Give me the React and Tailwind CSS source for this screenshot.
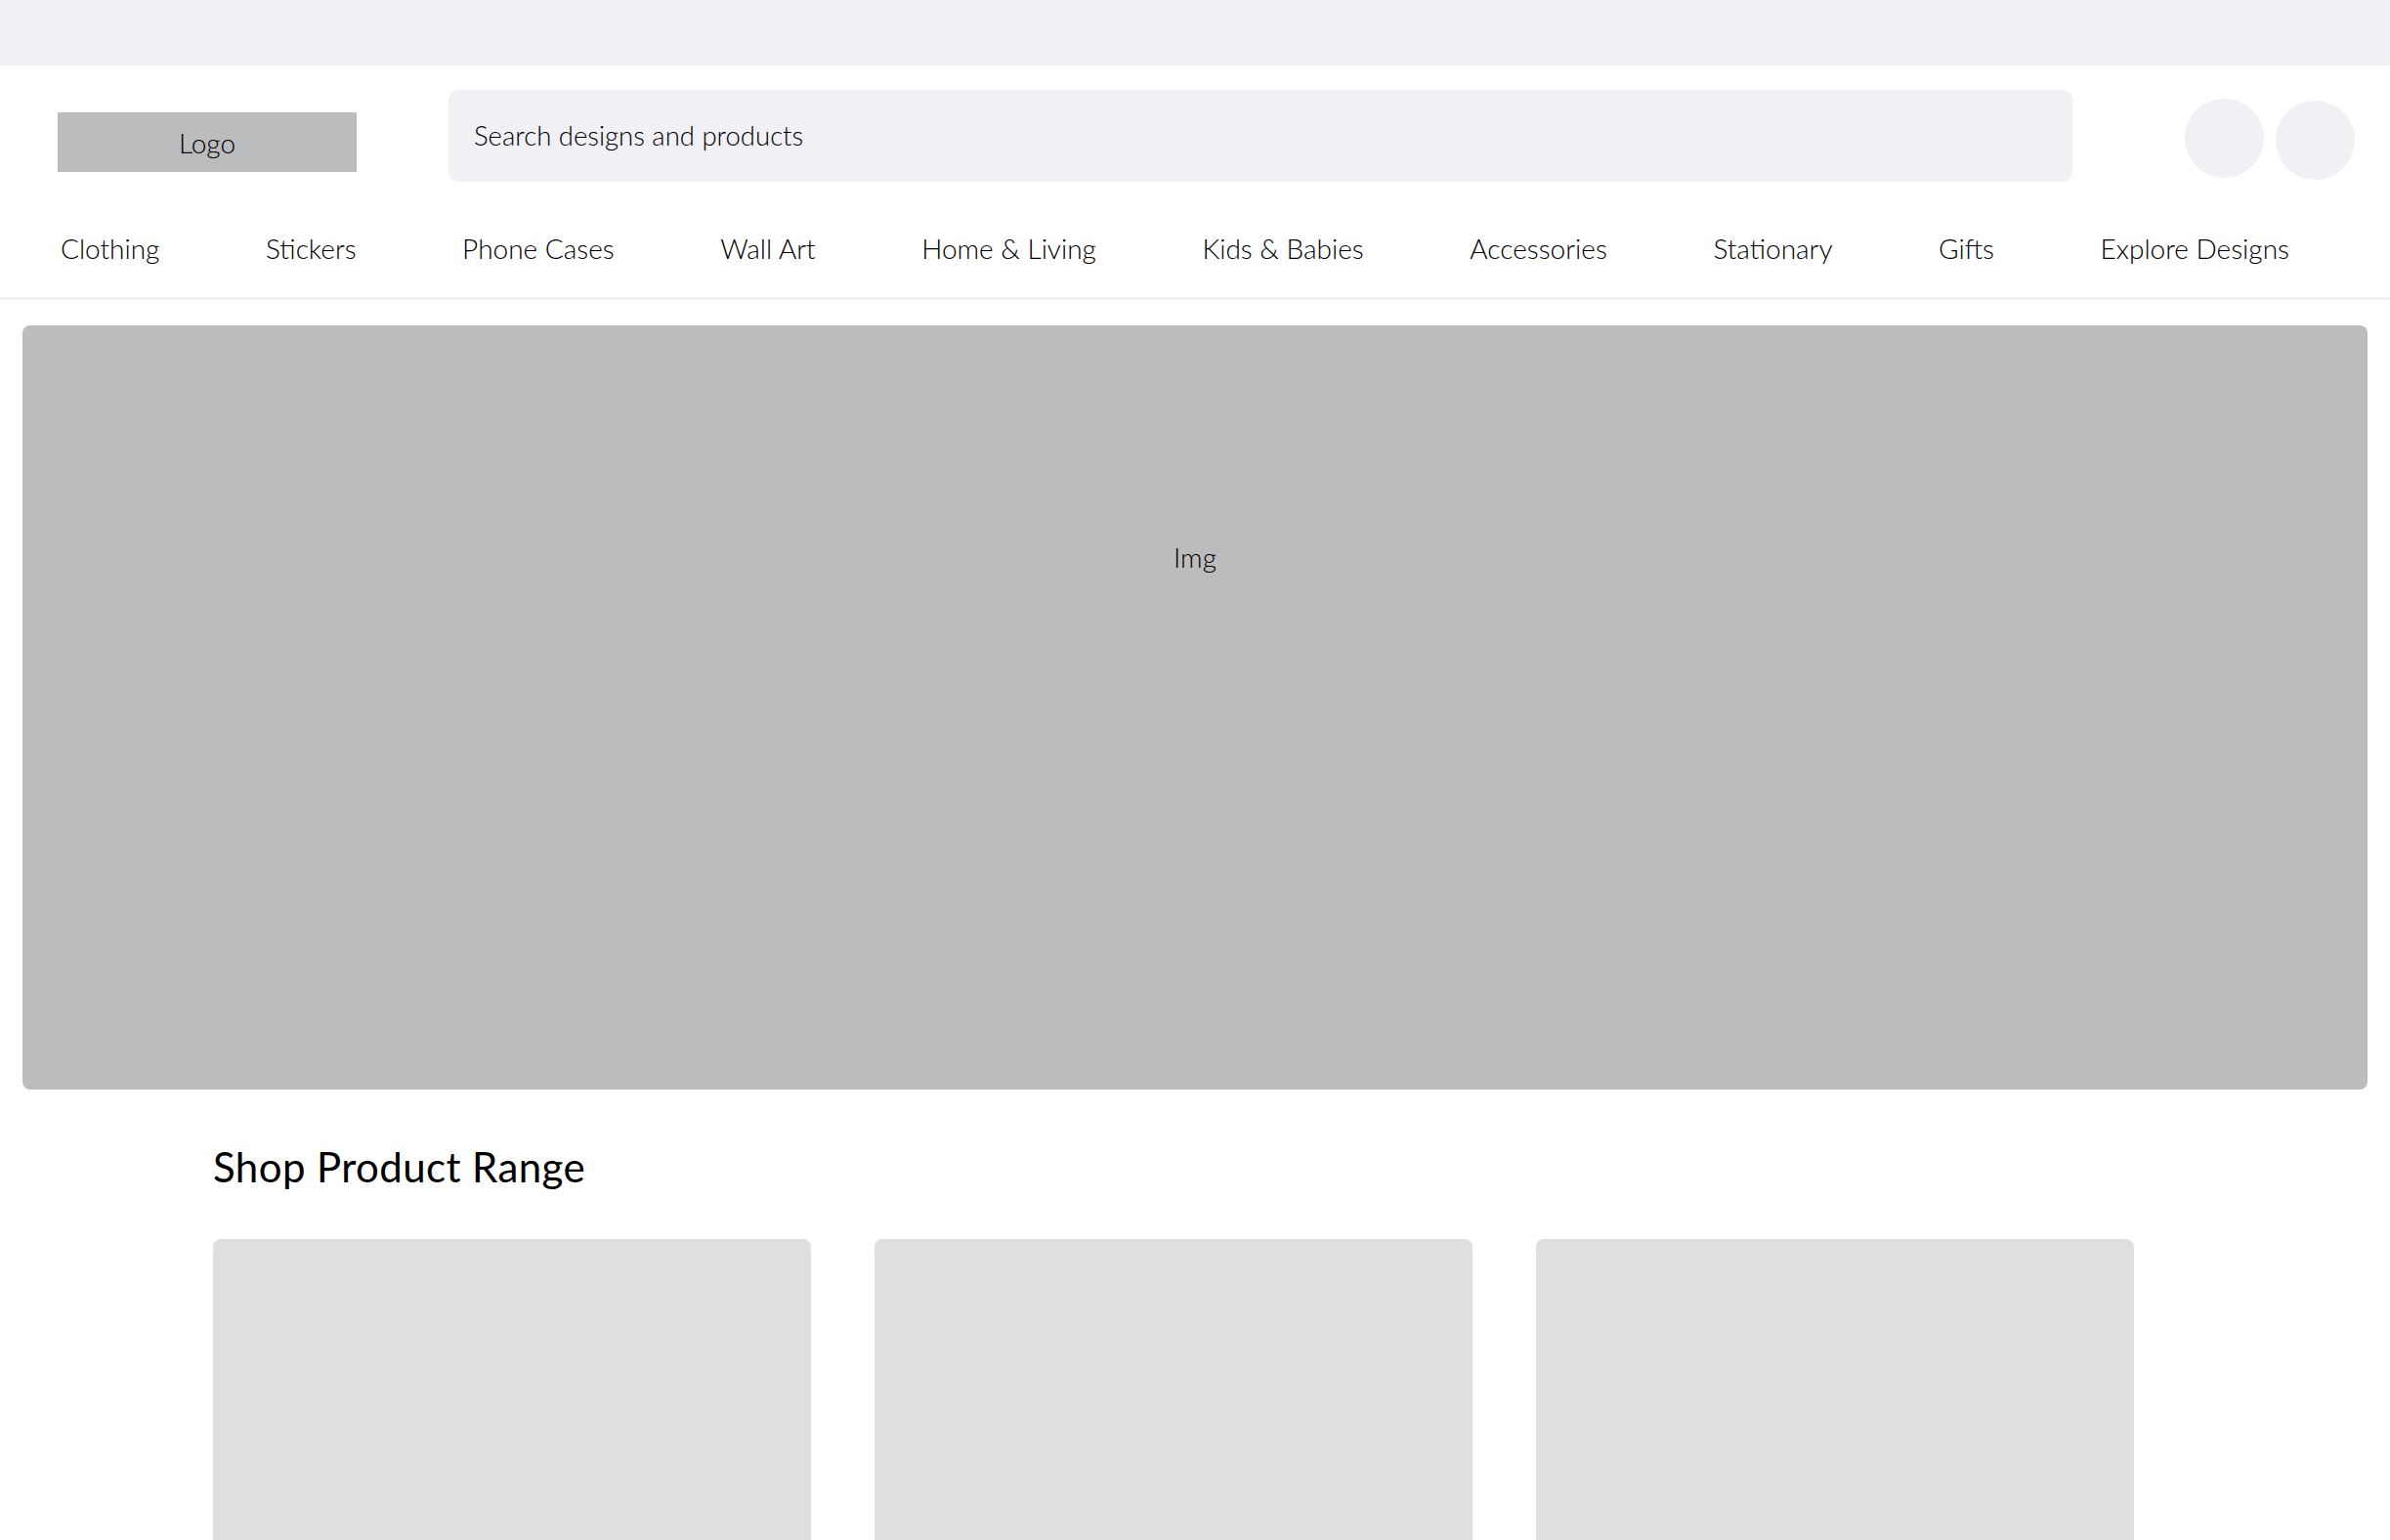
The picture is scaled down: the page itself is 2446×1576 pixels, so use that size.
import React from 'react';

const navItems = [
  'Clothing',
  'Stickers',
  'Phone Cases',
  'Wall Art',
  'Home & Living',
  'Kids & Babies',
  'Accessories',
  'Stationary',
  'Gifts',
  'Explore Designs',
];

const App = () => {
  return (
    <div className="min-h-screen bg-white text-black font-['Lato','Liberation_Sans',sans-serif] font-light">
      {/* top strip */}
      <div className="h-[67px] bg-[#f1f1f5]" />

      {/* header */}
      <header className="flex items-start pl-[59px] pr-[36px] pt-[25px]">
        <div className="mt-[23px] flex h-[61px] w-[306px] items-center justify-center bg-[#bbbcbe] text-[28px]">
          Logo
        </div>
        <div className="ml-[94px] flex h-[94px] flex-1 items-center rounded-[10px] bg-[#f1f1f5] pl-[26px] text-[27.5px]">
          Search designs and products
        </div>
        <div className="ml-[115px] flex gap-[12px]">
          <div className="mt-[9px] h-[81px] w-[81px] rounded-full bg-[#f1f1f5]" />
          <div className="mt-[11px] h-[81px] w-[81px] rounded-full bg-[#f1f1f5]" />
        </div>
      </header>

      {/* categories */}
      <nav className="flex justify-between border-b-[3px] border-[#f1f1f5] pl-[62px] pr-[103px] pt-[50px] pb-[32px] text-[28px] leading-[36px]">
        {navItems.map((item) => (
          <span key={item}>{item}</span>
        ))}
      </nav>

      {/* hero */}
      <div className="mx-[23px] mt-[26px] h-[782px] rounded-[8px] bg-[#bbbcbe] pt-[220px] text-center text-[28px] leading-[34px]">
        Img
      </div>

      {/* product range */}
      <section className="pl-[218px] pt-[54px]">
        <h2 className="text-[42px] font-normal leading-[50px] tracking-[0.4px]">Shop Product Range</h2>
        <div className="mt-[49px] flex gap-[65px]">
          <div className="h-[612px] w-[612px] rounded-[8px] bg-[#e0dfe0]" />
          <div className="h-[612px] w-[612px] rounded-[8px] bg-[#e0dfe0]" />
          <div className="h-[612px] w-[612px] rounded-[8px] bg-[#e0dfe0]" />
        </div>
      </section>
    </div>
  );
};

export default App;
